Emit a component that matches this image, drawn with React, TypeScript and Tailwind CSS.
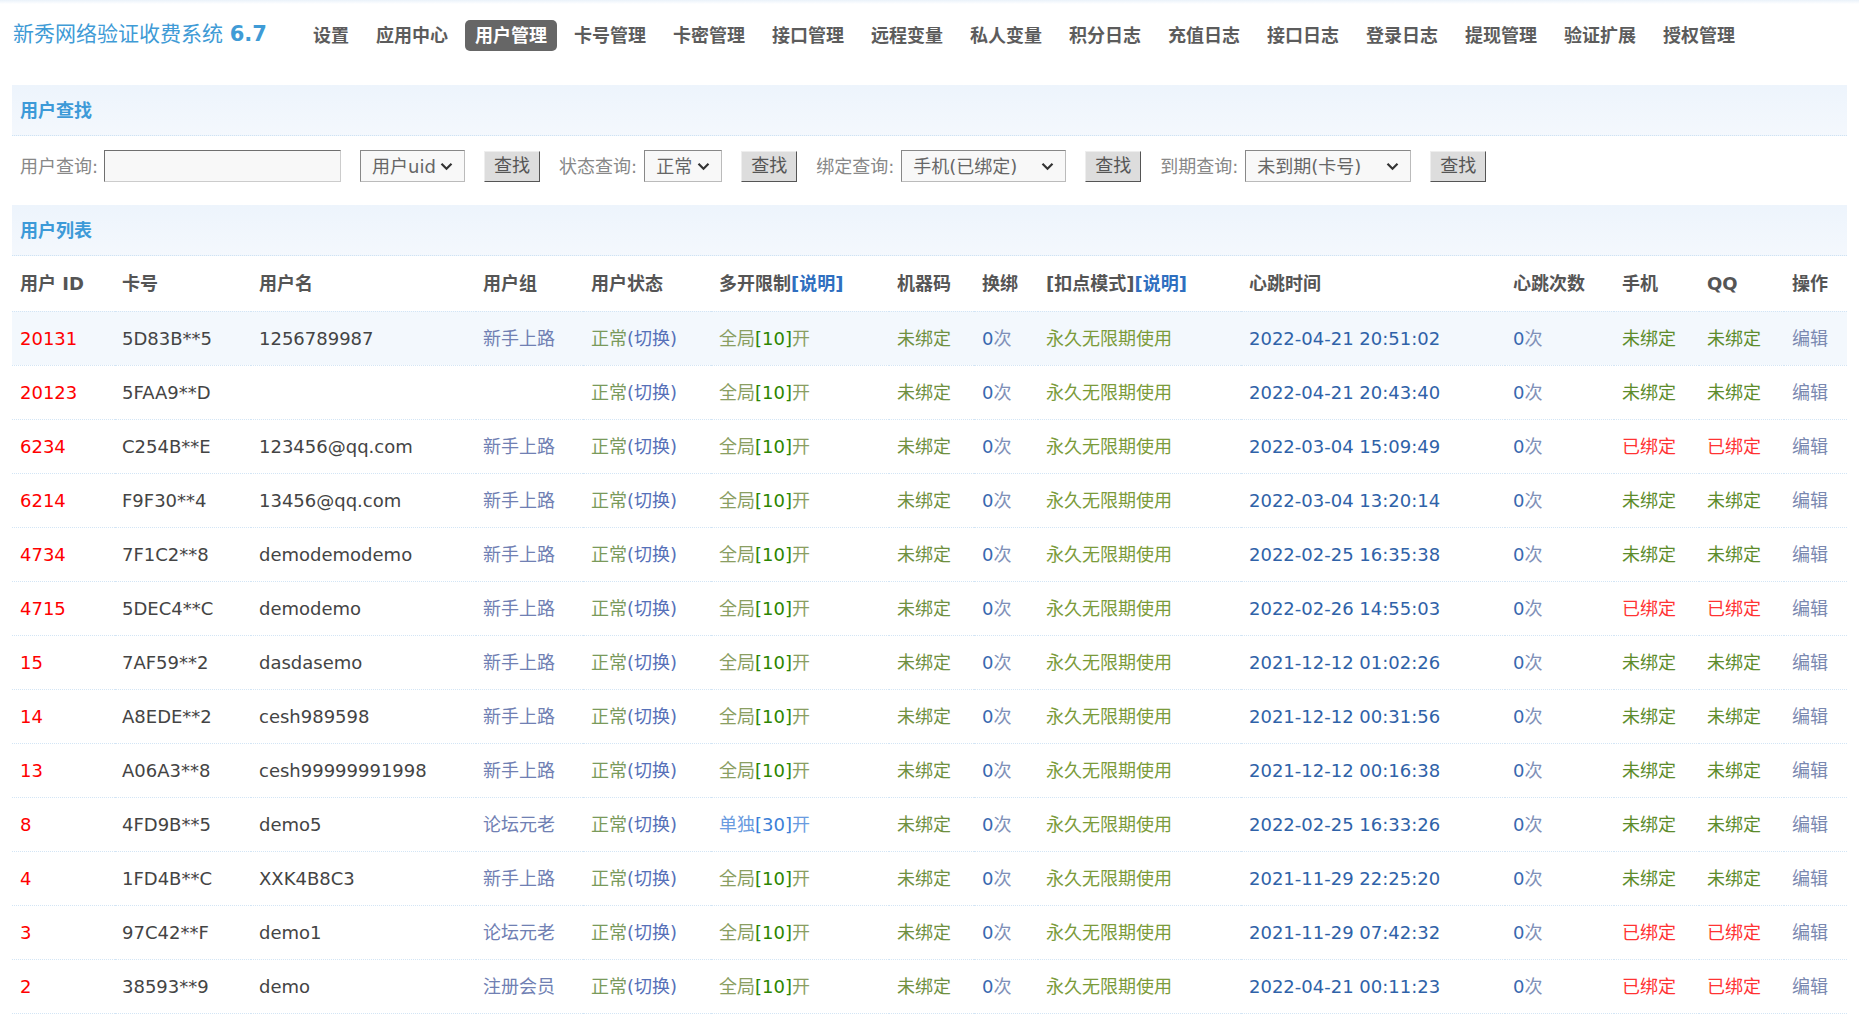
import React from "react";

const navItems = ["设置", "应用中心", "用户管理", "卡号管理", "卡密管理", "接口管理", "远程变量", "私人变量", "积分日志", "充值日志", "接口日志", "登录日志", "提现管理", "验证扩展", "授权管理"];

const colWidths = [103, 136, 225, 107, 128, 178, 85, 64, 203, 264, 109, 85, 85, 63];

type Row = {
    id: string;
    card: string;
    name: string;
    group: string;
    limit?: "single";
    time: string;
    phone: boolean;
    qq: boolean;
};

const rows: Row[] = [
    { id: "20131", card: "5D83B**5", name: "1256789987", group: "新手上路", time: "2022-04-21 20:51:02", phone: false, qq: false },
    { id: "20123", card: "5FAA9**D", name: "", group: "", time: "2022-04-21 20:43:40", phone: false, qq: false },
    { id: "6234", card: "C254B**E", name: "123456@qq.com", group: "新手上路", time: "2022-03-04 15:09:49", phone: true, qq: true },
    { id: "6214", card: "F9F30**4", name: "13456@qq.com", group: "新手上路", time: "2022-03-04 13:20:14", phone: false, qq: false },
    { id: "4734", card: "7F1C2**8", name: "demodemodemo", group: "新手上路", time: "2022-02-25 16:35:38", phone: false, qq: false },
    { id: "4715", card: "5DEC4**C", name: "demodemo", group: "新手上路", time: "2022-02-26 14:55:03", phone: true, qq: true },
    { id: "15", card: "7AF59**2", name: "dasdasemo", group: "新手上路", time: "2021-12-12 01:02:26", phone: false, qq: false },
    { id: "14", card: "A8EDE**2", name: "cesh989598", group: "新手上路", time: "2021-12-12 00:31:56", phone: false, qq: false },
    { id: "13", card: "A06A3**8", name: "cesh99999991998", group: "新手上路", time: "2021-12-12 00:16:38", phone: false, qq: false },
    { id: "8", card: "4FD9B**5", name: "demo5", group: "论坛元老", limit: "single", time: "2022-02-25 16:33:26", phone: false, qq: false },
    { id: "4", card: "1FD4B**C", name: "XXK4B8C3", group: "新手上路", time: "2021-11-29 22:25:20", phone: false, qq: false },
    { id: "3", card: "97C42**F", name: "demo1", group: "论坛元老", time: "2021-11-29 07:42:32", phone: true, qq: true },
    { id: "2", card: "38593**9", name: "demo", group: "注册会员", time: "2022-04-21 00:11:23", phone: true, qq: true },
];

function Chevron() {
    return (
        <svg width="13" height="9" viewBox="0 0 13 9" className="shrink-0">
            <path d="M1.5 1.8 L6.5 6.8 L11.5 1.8" fill="none" stroke="#333" strokeWidth="2.2" />
        </svg>
    );
}

function FakeSelect({ label, width }: { label: string; width: string }) {
    return (
        <div className={`${width} h-[32px] flex items-center justify-between pl-[11px] pr-[11px] bg-[#f8f8f8] border border-[#bbb] border-t-[#888] border-l-[#888] text-[#666]`}>
            <span className="whitespace-nowrap">{label}</span>
            <Chevron />
        </div>
    );
}

function FindButton() {
    return (
        <button className="h-[31px] px-[9px] bg-[#dddddd] border border-[#eeeeee] border-b-[#555] border-r-[#555] text-[#555] leading-none">
            查找
        </button>
    );
}

function Bound({ on }: { on: boolean }) {
    return on ? <span className="text-[#ff3333]">已绑定</span> : <span className="text-[#5d8c2c]">未绑定</span>;
}

export default function App() {
    return (
        <div className="w-[1859px] h-[1024px] overflow-hidden bg-white font-['DejaVu_Sans','Noto_Sans_CJK_SC',sans-serif] text-[18px]">
            <div className="h-[4px] bg-linear-to-b from-[#eaf2fa] to-white" />
            <div className="h-[62px] flex items-center pl-[13px]">
                <div className="text-[21px] text-[#3f9bd6] whitespace-nowrap">
                    新秀网络验证收费系统 <span className="font-bold">6.7</span>
                </div>
                <div className="flex items-center gap-[7px] ml-[36px]">
                    {navItems.map((item) => (
                        <div
                            key={item}
                            className={`h-[31px] leading-[31px] px-[10px] rounded-[5px] whitespace-nowrap font-bold ${item === "用户管理" ? "bg-[#666] text-white" : "text-[#5c5c5c]"}`}
                        >
                            {item}
                        </div>
                    ))}
                </div>
            </div>

            <div className="px-[12px] pt-[19px]">
                <div className="h-[51px] flex items-center pl-[8px] bg-linear-to-b from-[#edf4fc] to-[#f4f8fd] border-b border-dotted border-[#cfe3f4] text-[#3d9ad8] font-bold">
                    用户查找
                </div>

                <div className="h-[69px] pb-[9px] flex items-center pl-[8px] text-[#888]">
                    <span className="whitespace-nowrap">用户查询:</span>
                    <div className="ml-[6px] w-[237px] h-[32px] bg-[#f8f8f8] border border-[#ccc] border-t-[#6f6f6f] border-l-[#6f6f6f]" />
                    <div className="ml-[19px]"><FakeSelect label="用户uid" width="w-[105px]" /></div>
                    <div className="ml-[19px]"><FindButton /></div>
                    <span className="ml-[19px] whitespace-nowrap">状态查询:</span>
                    <div className="ml-[7px]"><FakeSelect label="正常" width="w-[78px]" /></div>
                    <div className="ml-[19px]"><FindButton /></div>
                    <span className="ml-[19px] whitespace-nowrap">绑定查询:</span>
                    <div className="ml-[7px]"><FakeSelect label="手机(已绑定)" width="w-[165px]" /></div>
                    <div className="ml-[19px]"><FindButton /></div>
                    <span className="ml-[19px] whitespace-nowrap">到期查询:</span>
                    <div className="ml-[7px]"><FakeSelect label="未到期(卡号)" width="w-[166px]" /></div>
                    <div className="ml-[19px]"><FindButton /></div>
                </div>

                <div className="h-[51px] flex items-center pl-[8px] bg-linear-to-b from-[#edf4fc] to-[#f4f8fd] border-b border-dotted border-[#cfe3f4] text-[#3d9ad8] font-bold">
                    用户列表
                </div>

                <table className="w-full table-fixed border-collapse">
                    <colgroup>
                        {colWidths.map((w, i) => (
                            <col key={i} style={{ width: w }} />
                        ))}
                    </colgroup>
                    <thead>
                        <tr className="h-[55px] border-b border-dotted border-[#d3e5f5] text-left text-[#555] font-bold">
                            <th className="pl-[8px] whitespace-nowrap">用户 ID</th>
                            <th className="pl-[7px]">卡号</th>
                            <th className="pl-[8px]">用户名</th>
                            <th className="pl-[7px]">用户组</th>
                            <th className="pl-[8px]">用户状态</th>
                            <th className="pl-[8px] whitespace-nowrap">多开限制<span className="text-[#2f6fc0]">[说明]</span></th>
                            <th className="pl-[8px]">机器码</th>
                            <th className="pl-[8px]">换绑</th>
                            <th className="pl-[8px] whitespace-nowrap">[扣点模式]<span className="text-[#2f6fc0]">[说明]</span></th>
                            <th className="pl-[8px]">心跳时间</th>
                            <th className="pl-[8px]">心跳次数</th>
                            <th className="pl-[8px]">手机</th>
                            <th className="pl-[8px]">QQ</th>
                            <th className="pl-[8px]">操作</th>
                        </tr>
                    </thead>
                    <tbody>
                        {rows.map((r, i) => (
                            <tr key={r.id} className={`h-[54px] border-b border-dotted border-[#d3e5f5] whitespace-nowrap ${i === 0 ? "bg-[#f3f8fd]" : ""}`}>
                                <td className="pl-[8px] text-[#ff0000]">{r.id}</td>
                                <td className="pl-[7px] text-[#444]">{r.card}</td>
                                <td className="pl-[8px] text-[#444]">{r.name}</td>
                                <td className="pl-[7px] text-[#7080b3]">{r.group}</td>
                                <td className="pl-[8px]">
                                    <span className="text-[#7a9a5a]">正常</span>
                                    <span className="text-[#5670b8]">(切换)</span>
                                </td>
                                <td className="pl-[8px]">
                                    {r.limit === "single" ? (
                                        <>
                                            <span className="text-[#6a9be0]">单独</span>
                                            <span className="text-[#3b7fd8]">[30]</span>
                                            <span className="text-[#6a9be0]">开</span>
                                        </>
                                    ) : (
                                        <>
                                            <span className="text-[#8a9e62]">全局</span>
                                            <span className="text-[#2b8500]">[10]</span>
                                            <span className="text-[#8a9e62]">开</span>
                                        </>
                                    )}
                                </td>
                                <td className="pl-[8px] text-[#6f9040]">未绑定</td>
                                <td className="pl-[8px]">
                                    <span className="text-[#3a68b0]">0</span>
                                    <span className="text-[#8090b8]">次</span>
                                </td>
                                <td className="pl-[8px] text-[#7b9b3a]">永久无限期使用</td>
                                <td className="pl-[8px] text-[#2f62a8]">{r.time}</td>
                                <td className="pl-[8px]">
                                    <span className="text-[#3a68b0]">0</span>
                                    <span className="text-[#8090b8]">次</span>
                                </td>
                                <td className="pl-[8px]"><Bound on={r.phone} /></td>
                                <td className="pl-[8px]"><Bound on={r.qq} /></td>
                                <td className="pl-[8px] text-[#7a88b0]">编辑</td>
                            </tr>
                        ))}
                    </tbody>
                </table>
            </div>
        </div>
    );
}
